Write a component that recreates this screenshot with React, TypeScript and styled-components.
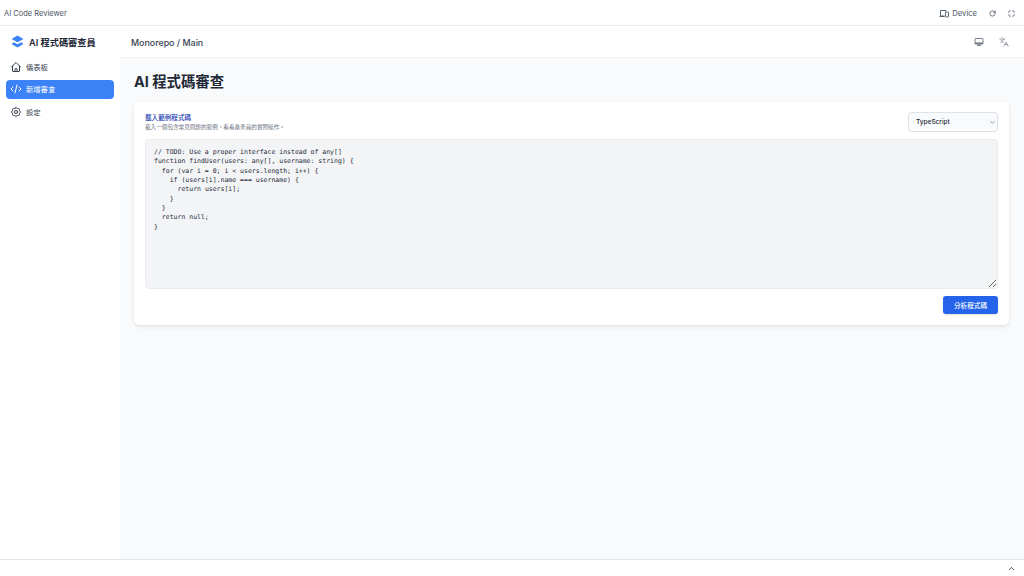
import { FC, ReactNode } from "react"
import styled, { createGlobalStyle } from "styled-components"
import { ChevronDown, ChevronUp, Languages, Maximize, RotateCw } from "lucide-react"
import { HiOutlineCode, HiOutlineCog, HiOutlineHome } from "react-icons/hi"

const sans = `Inter, "Noto Sans CJK TC", sans-serif`

const GlobalStyle = createGlobalStyle`
  html, body {
    margin: 0;
    height: 100%;
    background: #fff;
    font-family: ${sans};
    color: #1f2937;
  }
  * { box-sizing: border-box; }
`

const Page = styled.div`
  width: 1024px;
  height: 576px;
  display: flex;
  flex-direction: column;
  overflow: hidden;
`

const TopBar = styled.header`
  height: 26px;
  flex: none;
  display: flex;
  align-items: center;
  justify-content: space-between;
  padding: 1px 9px 0 4px;
  background: #fff;
  border-bottom: 1px solid #eceef1;
  font-size: 7.5px;
  color: #4b5563;
`

const TopActions = styled.div`
  display: flex;
  align-items: center;
  gap: 12px;
`

const DeviceLabel = styled.span`
  display: flex;
  align-items: center;
  gap: 3px;
  font-size: 7.6px;
`

const Body = styled.div`
  flex: 1;
  min-height: 0;
  display: flex;
`

const Sidebar = styled.aside`
  width: 120px;
  flex: none;
  padding: 0 6px;
  background: #fff;
`

const Brand = styled.div`
  height: 31px;
  display: flex;
  align-items: center;
  gap: 5px;
  padding-left: 5px;
  font-size: 9.2px;
  font-weight: 600;
  color: #1f2937;
`

const Nav = styled.nav`
  display: flex;
  flex-direction: column;
  gap: 3.5px;
`

const NavItem = styled.div<{ $active?: boolean }>`
  height: 19px;
  display: flex;
  align-items: center;
  gap: 4px;
  padding-left: 4px;
  border-radius: 4px;
  font-size: 7.3px;
  background: ${(p) => (p.$active ? "#3b82f6" : "transparent")};
  color: ${(p) => (p.$active ? "#fff" : "#374151")};
`

const Column = styled.div`
  flex: 1;
  min-width: 0;
  display: flex;
  flex-direction: column;
`

const Header = styled.div`
  height: 32px;
  flex: none;
  display: flex;
  align-items: center;
  justify-content: space-between;
  padding: 1px 15px 0 11px;
  background: #fff;
  border-bottom: 1px solid #eff1f3;
  font-size: 8.9px;
  font-weight: 500;
  color: #374151;
`

const HeaderActions = styled.div`
  display: flex;
  align-items: center;
  gap: 15px;
  color: #6b7280;
`

const Main = styled.main`
  flex: 1;
  background: #f9fafb;
  padding: 14px 15px 0 14px;
`

const Title = styled.h1`
  margin: 0 0 11px;
  height: 19px;
  line-height: 19px;
  font-size: 14.4px;
  font-weight: 700;
  color: #1f2937;
`

const Card = styled.section`
  height: 223px;
  padding: 10px 11px;
  background: #fff;
  border-radius: 5px;
  box-shadow: 0 2px 4px rgba(0, 0, 0, 0.07), 0 1px 2px rgba(0, 0, 0, 0.05);
`

const CardTop = styled.div`
  height: 20px;
  display: flex;
  align-items: center;
  justify-content: space-between;
`

const CardHeading = styled.div`
  font-size: 6.6px;
  line-height: 10px;
  font-weight: 500;
  color: #1e40af;
`

const CardHint = styled.div`
  font-size: 5.6px;
  line-height: 9px;
  color: #6b7280;
`

const SelectWrap = styled.div`
  position: relative;
  width: 90px;
  height: 20px;
`

const LangSelect = styled.select`
  display: block;
  appearance: none;
  width: 100%;
  height: 100%;
  padding: 0 12px 0 7px;
  font-family: ${sans};
  font-size: 6.5px;
  font-weight: 500;
  color: #1f2937;
  background: #f9fafb;
  border: 1px solid #dfe2e6;
  border-radius: 4px;
`

const SelectArrow = styled(ChevronDown)`
  position: absolute;
  top: 6.5px;
  right: 2.5px;
  color: #4b5563;
  pointer-events: none;
`

const CodeArea = styled.textarea`
  display: block;
  width: 853px;
  height: 150px;
  margin-top: 7px;
  padding: 8px;
  font-family: "DejaVu Sans Mono", monospace;
  font-size: 6.5px;
  line-height: 9.33px;
  color: #1f2937;
  background: #f3f4f6;
  border: 1px solid #e9ebee;
  border-radius: 4px;
  outline: none;
`

const CardBottom = styled.div`
  display: flex;
  justify-content: flex-end;
  margin-top: 7px;
`

const PrimaryButton = styled.button`
  width: 55px;
  height: 18px;
  padding: 0;
  border: 0;
  border-radius: 3px;
  font-family: ${sans};
  font-size: 6.6px;
  font-weight: 500;
  color: #fff;
  background: #2563eb;
  box-shadow: 0 1px 2px rgba(0, 0, 0, 0.12);
`

const BottomBar = styled.footer`
  height: 17px;
  flex: none;
  display: flex;
  align-items: center;
  justify-content: flex-end;
  padding-right: 8px;
  background: #fff;
  border-top: 1px solid #e2e4e8;
  color: #374151;
`

const Logo: FC = () => (
  <svg width="13" height="13" viewBox="0 0 24 24" fill="#3b82f6">
    <path d="M12 1 23 7.500 12 13.500 1 7.500Z" />
    <path d="M5 13.200 12 17l7-3.800 4 3.300L12 23 1 16.500Z" />
  </svg>
)

const DeviceIcon: FC = () => (
  <svg width="10" height="9" viewBox="0 0 20 18" fill="none" stroke="currentColor" strokeWidth="1.8">
    <path d="M11 14H3V3h11v2" />
    <path d="M1 15h10" />
    <rect x="13" y="6" width="6" height="10" rx="1" />
  </svg>
)

const DesktopIcon: FC = () => (
  <svg width="10" height="10" viewBox="0 0 20 20" fill="none" stroke="currentColor" strokeWidth="1.800">
    <rect x="2" y="3" width="16" height="11" rx="1" />
    <rect x="2" y="11" width="16" height="3" fill="currentColor" stroke="none" />
    <path d="M6 17h8M10 14v3" />
  </svg>
)

const sampleCode = `// TODO: Use a proper interface instead of any[]
function findUser(users: any[], username: string) {
  for (var i = 0; i < users.length; i++) {
    if (users[i].name === username) {
      return users[i];
    }
  }
  return null;
}`

const navItems: { label: string; icon: ReactNode; active?: boolean }[] = [
  { label: "儀表板", icon: <HiOutlineHome size={12} /> },
  { label: "新增審查", icon: <HiOutlineCode size={12} />, active: true },
  { label: "設定", icon: <HiOutlineCog size={12} /> },
]

const App: FC = () => (
  <Page>
    <GlobalStyle />
    <TopBar>
      <span>AI Code Reviewer</span>
      <TopActions>
        <DeviceLabel>
          <DeviceIcon />
          Device
        </DeviceLabel>
        <RotateCw size={7} strokeWidth={2.6} />
        <Maximize size={7} strokeWidth={2.6} />
      </TopActions>
    </TopBar>
    <Body>
      <Sidebar>
        <Brand>
          <Logo />
          AI 程式碼審查員
        </Brand>
        <Nav>
          {navItems.map((item) => (
            <NavItem key={item.label} $active={item.active}>
              {item.icon}
              {item.label}
            </NavItem>
          ))}
        </Nav>
      </Sidebar>
      <Column>
        <Header>
          Monorepo / Main
          <HeaderActions>
            <DesktopIcon />
            <Languages size={10} strokeWidth={1.5} />
          </HeaderActions>
        </Header>
        <Main>
          <Title>AI 程式碼審查</Title>
          <Card>
            <CardTop>
              <div>
                <CardHeading>載入範例程式碼</CardHeading>
                <CardHint>載入一個包含常見問題的範例，看看審查員的實際操作。</CardHint>
              </div>
              <SelectWrap>
                <LangSelect defaultValue="TypeScript">
                  <option>TypeScript</option>
                  <option>JavaScript</option>
                </LangSelect>
                <SelectArrow size={7} strokeWidth={2} />
              </SelectWrap>
            </CardTop>
            <CodeArea defaultValue={sampleCode} spellCheck={false} />
            <CardBottom>
              <PrimaryButton>分析程式碼</PrimaryButton>
            </CardBottom>
          </Card>
        </Main>
      </Column>
    </Body>
    <BottomBar>
      <ChevronUp size={9} strokeWidth={2.5} />
    </BottomBar>
  </Page>
)

export default App
